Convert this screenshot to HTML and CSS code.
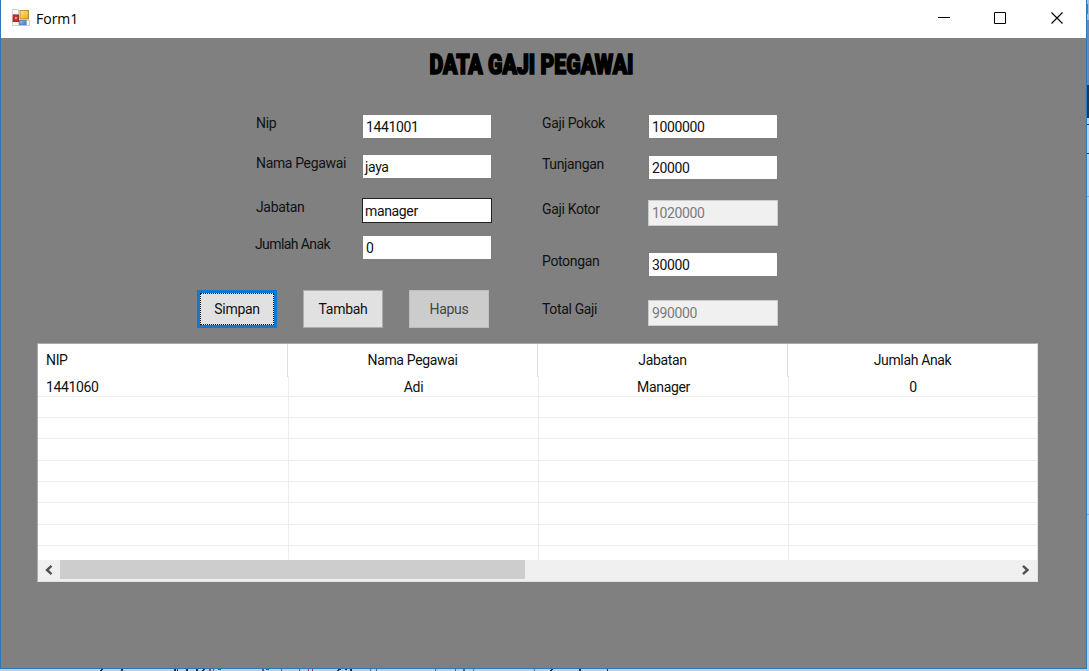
FILE: index.html
```html
<!DOCTYPE html>
<html lang="id">
<head>
<meta charset="utf-8">
<title>Form1</title>
<link rel="stylesheet" href="styles.css">
</head>
<body>
<div class="desktop">
  <div class="window">
    <header class="titlebar">
      <svg class="app-icon" width="18" height="18" viewBox="0 0 18 18">
        <defs>
          <linearGradient id="gold" x1="0" y1="0" x2="1" y2="1"><stop offset="0" stop-color="#ffe98a"/><stop offset="1" stop-color="#e9a900"/></linearGradient>
          <linearGradient id="blue" x1="0" y1="0" x2="1" y2="1"><stop offset="0" stop-color="#9cc8f5"/><stop offset="1" stop-color="#3374c8"/></linearGradient>
        </defs>
        <path d="M.5.5h6v5h-6zM.5 12.500h6v4h-6zM14.500 11.500h3v5h-3z" fill="#fafafa" stroke="#d0d0d0"/>
        <rect x="1" y="6" width="5.500" height="6.500" fill="#c5332a" stroke="#9b3029"/>
        <rect x="3" y="8" width="1.800" height="2" fill="#f2a59c"/>
        <rect x="8" y="1.500" width="8.500" height="8.500" fill="url(#gold)" stroke="#b98a2c"/>
        <rect x="7.500" y="11.500" width="6.500" height="4.500" fill="url(#blue)" stroke="#5c86bd"/>
      </svg>
      <span class="caption">Form1</span>
      <svg class="controls" width="126" height="14" viewBox="0 0 126 14" fill="none" stroke="#000">
        <path d="M0 6.500h12"/>
        <path d="M56.500 1.500h11v11h-11z"/>
        <path d="M113.500 1.500l11 11M124.500 1.500l-11 11" stroke-width="1.150"/>
      </svg>
    </header>
    <main class="client">
      <h1 class="heading">
        <svg width="209" height="36" viewBox="0 0 209 36"><text class="heading-text" x="1.500" y="23.500" textLength="204" lengthAdjust="spacingAndGlyphs">DATA GAJI PEGAWAI</text></svg>
      </h1>
      <div class="form">
        <section class="left">
          <div class="fields">
            <label class="field nip"><span class="label">Nip</span><span class="box num">1441001</span></label>
            <label class="field nama"><span class="label">Nama Pegawai</span><span class="box">jaya</span></label>
            <label class="field jabatan"><span class="label">Jabatan</span><span class="box focused">manager</span></label>
            <label class="field anak"><span class="label tight">Jumlah Anak</span><span class="box num">0</span></label>
          </div>
          <div class="actions">
            <button class="btn default"><span class="dots">Simpan</span></button>
            <button class="btn">Tambah</button>
            <button class="btn off">Hapus</button>
          </div>
        </section>
        <section class="right">
          <label class="field pokok"><span class="label">Gaji Pokok</span><span class="box num">1000000</span></label>
          <label class="field tunjangan"><span class="label">Tunjangan</span><span class="box num">20000</span></label>
          <label class="field kotor"><span class="label">Gaji Kotor</span><span class="box num disabled">1020000</span></label>
          <label class="field potongan"><span class="label">Potongan</span><span class="box num">30000</span></label>
          <label class="field total"><span class="label">Total Gaji</span><span class="box num disabled">990000</span></label>
        </section>
      </div>
      <div class="list">
        <div class="row head"><span>NIP</span><span>Nama Pegawai</span><span>Jabatan</span><span>Jumlah Anak</span></div>
        <div class="body">
          <div class="row first"><span>1441060</span><span>Adi</span><span>Manager</span><span>0</span></div>
          <div class="row"><span></span><span></span><span></span><span></span></div>
          <div class="row"><span></span><span></span><span></span><span></span></div>
          <div class="row"><span></span><span></span><span></span><span></span></div>
          <div class="row"><span></span><span></span><span></span><span></span></div>
          <div class="row"><span></span><span></span><span></span><span></span></div>
          <div class="row"><span></span><span></span><span></span><span></span></div>
          <div class="row"><span></span><span></span><span></span><span></span></div>
          <div class="row"><span></span><span></span><span></span><span></span></div>
        </div>
        <div class="scrollbar">
          <svg class="arrow" width="22" height="20" viewBox="0 0 22 20"><path d="M13.500 5.800L9 10l4.500 4.200"/></svg>
          <div class="track"><div class="thumb"></div></div>
          <svg class="arrow" width="22" height="20" viewBox="0 0 22 20"><path d="M8 5.800l4.500 4.200L8 14.200"/></svg>
        </div>
      </div>
    </main>
  </div>
  <svg class="edge" width="2" height="669" viewBox="0 0 2 669">
    <path fill="#a4bddd" d="M0 0h2v20H0z"/><path fill="#a85a7c" d="M0 4h1v10H0z"/>
    <path fill="#6689b5" d="M0 20h2v65H0z"/><path fill="#153a60" d="M0 85h2v33H0zM0 124h2v1H0zM0 153h2v1H0z"/>
    <path fill="#7fa9cf" d="M0 196h2v1H0zM0 514h2v1H0z"/>
  </svg>
  <svg class="under" width="1089" height="2" viewBox="0 0 1089 2">
    <path fill="#142c4c" d="M101 0h2v1h-2zM100 1h2v1h-2zM121 0h2v2h-2zM174 0h2v2h-2zM177 0h1v2h-1zM186 0h2v2h-2zM196 0h2v2h-2zM203 0h2v1h-2zM202 1h2v1h-2zM338 0h3v1h-3zM337 1h2v1h-2zM345 0h2v1h-2zM350 0h2v2h-2zM551 0h2v1h-2zM550 1h2v1h-2zM579 0h2v2h-2zM607 0h1v2h-1z"/>
    <path fill="#8e3b5c" d="M209 0h2v2h-2zM213 0h1v2h-1zM218 0h3v1h-3zM262 0h2v2h-2zM266 0h3v1h-3zM281 0h1v2h-1zM299 0h1v2h-1zM308 0h1v2h-1zM312 0h1v2h-1z"/>
    <path fill="#2d7793" d="M370 0h1v2h-1zM376 0h1v2h-1zM435 0h1v2h-1zM455 0h1v2h-1zM463 0h2v2h-2zM473 0h1v2h-1zM534 0h1v2h-1z"/>
  </svg>
</div>
</body>
</html>
```
FILE: styles.css
```css
* { box-sizing: border-box; }
body { margin: 0; overflow: hidden; font-family: Roboto, "Liberation Sans", sans-serif; font-size: 14px; letter-spacing: -.35px; color: #111; }
svg { display: block; flex: none; }
.desktop { width: 1089px; height: 671px; background: #b5d3ee; display: grid; grid-template: 669px 2px / 1087px 2px; }
.under { grid-column: 1 / 3; }
.window { border: 1px solid #2f77b5; border-top: 0; background: #808080; }
.titlebar { height: 38px; background: #fff; display: flex; align-items: center; padding: 0 22px 2px 11px; }
.caption { font-family: "Open Sans", sans-serif; font-size: 14px; letter-spacing: 0; margin-left: 6px; color: #000; flex: 1; }
.client { height: 630px; padding: 12px 49px 0 36px; }
.heading { margin: 0 0 0 391px; height: 64px; }
.heading svg { overflow: visible; }
.heading-text { font: 900 28px Roboto, sans-serif; letter-spacing: 0; fill: #000; stroke: #000; stroke-width: 1.700px; }
.form { display: flex; height: 229px; }
.left { width: 504px; padding-left: 160px; }
.right { width: 240px; }
.fields { padding-left: 58px; height: 176px; }
.field { display: flex; height: 25px; }
.label { width: 107px; padding-left: 1px; line-height: 18px; white-space: nowrap; }
.tight { letter-spacing: -.6px; padding-left: 0; }
.box { width: 130px; height: 25px; border: 1px solid #7e7e7e; background: #fff; line-height: 25px; padding-left: 2px; color: #111; }
.num { padding-left: 3px; letter-spacing: -.35px; }
.focused { border-color: #222; }
.disabled { border-color: #ccc; background: #f0f0f0; color: #7b7b7b; height: 26px; line-height: 24px; }
.nama { margin-top: 15px; }
.jabatan { margin-top: 19px; }
.anak { margin-top: 12px; }
.tunjangan { margin-top: 16px; }
.kotor { margin-top: 20px; }
.potongan { margin-top: 27px; }
.total { margin-top: 23px; }
.actions { display: flex; gap: 26px; }
.btn { width: 80px; height: 38px; padding: 0; border: 1px solid #adadad; background: #e1e1e1; font: inherit; letter-spacing: -.3px; color: #111; }
.default { border: 3px solid #0f78d0; padding: 0; }
.dots { display: flex; align-items: center; justify-content: center; height: 100%; border: 1px dotted #111; }
.off { background: #ccc; border-color: #bfbfbf; color: #444; }
.list { width: 1001px; height: 238px; background: #fff; border: 1px solid #e0e2e6; border-top-color: #a7abb2; border-left-color: #a7abb2; display: flex; flex-direction: column; height: 239px; }
.row { display: grid; grid-template-columns: 251px 250px 250px 1fr; height: 21.300px; flex: none; border-bottom: 1px solid #ececec; }
.row span { text-align: center; border-right: 1px solid #ececec; line-height: 21px; }
.row span:first-child { text-align: left; padding-left: 8px; }
.row span:last-child { border-right: 0; }
.head { height: 31px; border: 0; grid-template-columns: 250px 250px 250px 1fr; }
.head span { line-height: 33px; border-color: #dedede; }
.body { height: 185px; padding-top: .6px; overflow: hidden; }
.first span { line-height: 23px; height: 20px; }
.scrollbar { display: flex; height: 21px; background: #f0f0f0; }
.track { flex: 1; }
.thumb { width: 465px; height: 19px; background: #cdcdcd; }
.arrow path { fill: none; stroke: #505050; stroke-width: 2.400; }
```
